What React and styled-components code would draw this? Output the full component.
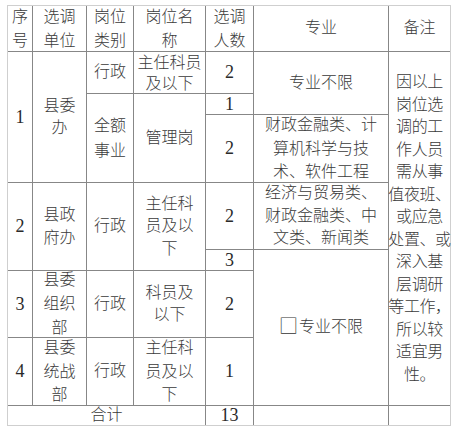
import React from "react";
import styled, { createGlobalStyle } from "styled-components";

const Global = createGlobalStyle`
  html, body { margin: 0; padding: 0; background: #ffffff; }
  body { font-family: "Liberation Serif", "Noto Sans CJK SC", serif; }
`;

const Page = styled.div`
  padding: 5px 0 0 7px;
  width: 456px;
  height: 436px;
  box-sizing: border-box;
  background: #ffffff;
`;

const Table = styled.div`
  display: grid;
  grid-template-columns: 24px 53px 46px 71px 47px 134px 61px;
  grid-template-rows: 45px 41px 20px 67px 66px 20px 66px 67px 19px;
  gap: 1px;
  background: #878787;
  border: 1px solid #cfcfcf;
  width: max-content;
`;

const Cell = styled.div`
  grid-column: ${(p) => p.$c} / span ${(p) => p.$cs || 1};
  grid-row: ${(p) => p.$r} / span ${(p) => p.$rs || 1};
  background: #ffffff;
  display: flex;
  align-items: center;
  justify-content: center;
  text-align: center;
  white-space: nowrap;
  font-family: "Liberation Serif", "Noto Sans CJK SC", serif;
  font-size: 16px;
  line-height: ${(p) => p.$lh || "22.5px"};
  letter-spacing: ${(p) => p.$ls || "0"};
  color: #3a3a3a;
  font-weight: 300;
`;

const Num = styled.span`
  font-family: "Liberation Serif", serif;
  font-size: 18px;
  color: #2a2a2a;
  font-weight: 400;
`;

const Box = styled.span`
  font-family: "Noto Sans CJK SC", sans-serif;
  font-size: 19px;
  line-height: 16px;
  vertical-align: -1px;
  margin-right: 1px;
  color: #333;
`;

const Lines = ({ t }) => (
  <div>
    {t.split("/").map((s, i) => (
      <div key={i}>{s}</div>
    ))}
  </div>
);

const C = ({ c, r, cs, rs, t, n, lh, ls, children }) => (
  <Cell $c={c} $r={r} $cs={cs} $rs={rs} $lh={lh} $ls={ls}>
    {children
      ? children
      : n !== undefined
      ? <Num>{n}</Num>
      : t
      ? <Lines t={t} />
      : null}
  </Cell>
);

const remark =
  "因以上/岗位选/调的工/作人员/需从事/值夜班、/或应急/处置、或/深入基/层调研/等工作，/所以较/适宜男/性。";

export default function App() {
  return (
    <Page>
      <Global />
      <Table>
        <C c={1} r={1} t="序/号" lh="24px" />
        <C c={2} r={1} t="选调/单位" lh="24px" />
        <C c={3} r={1} t="岗位/类别" lh="24px" />
        <C c={4} r={1} t="岗位名/称" lh="24px" />
        <C c={5} r={1} t="选调/人数" lh="24px" />
        <C c={6} r={1} t="专业" />
        <C c={7} r={1} t="备注" />

        <C c={1} r={2} rs={3} n="1" />
        <C c={2} r={2} rs={3} t="县委/办" />
        <C c={3} r={2} t="行政" />
        <C c={4} r={2} t="主任科员/及以下" lh="21px" />
        <C c={5} r={2} n="2" />
        <C c={6} r={2} rs={2} t="专业不限" />
        <C c={7} r={2} rs={7} t={remark} ls="-0.4px" />
        <C c={5} r={3} n="1" />
        <C c={3} r={3} rs={2} t="全额/事业" lh="25px" />
        <C c={4} r={3} rs={2} t="管理岗" />
        <C c={5} r={4} n="2" />
        <C c={6} r={4} t="财政金融类、计/算机科学与技/术、软件工程" lh="23.5px" />

        <C c={1} r={5} rs={2} n="2" />
        <C c={2} r={5} rs={2} t="县政/府办" />
        <C c={3} r={5} rs={2} t="行政" />
        <C c={4} r={5} rs={2} t="主任科/员及以/下" />
        <C c={5} r={5} n="2" />
        <C c={6} r={5} t="经济与贸易类、/财政金融类、中/文类、新闻类" />
        <C c={5} r={6} n="3" />
        <C c={6} r={6} rs={3}>
          <span>
            <Box>□</Box>专业不限
          </span>
        </C>

        <C c={1} r={7} n="3" />
        <C c={2} r={7} t="县委/组织/部" lh="24px" />
        <C c={3} r={7} t="行政" />
        <C c={4} r={7} t="科员及/以下" />
        <C c={5} r={7} n="2" />

        <C c={1} r={8} n="4" />
        <C c={2} r={8} t="县委/统战/部" lh="23.5px" />
        <C c={3} r={8} t="行政" />
        <C c={4} r={8} t="主任科/员及以/下" lh="23.5px" />
        <C c={5} r={8} n="1" />

        <C c={1} r={9} cs={4} t="合计" />
        <C c={5} r={9} n="13" />
        <C c={6} r={9} />
        <C c={7} r={9} />
      </Table>
    </Page>
  );
}
